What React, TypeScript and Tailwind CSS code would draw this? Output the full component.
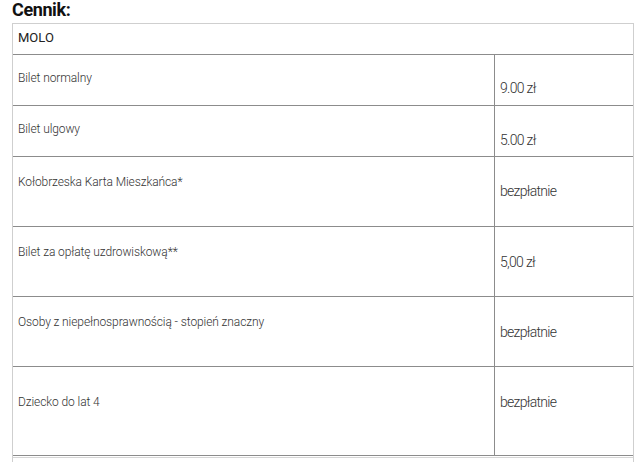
const rows = [
  { label: 'Bilet normalny', price: '9.00 zł', h: 'h-[51px]', lp: 'pt-[15px]', rp: 'pt-[24px]' },
  { label: 'Bilet ulgowy', price: '5.00 zł', h: 'h-[51px]', lp: 'pt-[15px]', rp: 'pt-[25px]' },
  { label: 'Kołobrzeska Karta Mieszkańca*', price: 'bezpłatnie', h: 'h-[70px]', lp: 'pt-[17px]', rp: 'pt-[25px]' },
  { label: 'Bilet za opłatę uzdrowiskową**', price: '5,00 zł', h: 'h-[70px]', lp: 'pt-[17px]', rp: 'pt-[26px]' },
  { label: 'Osoby z niepełnosprawnością - stopień znaczny', price: 'bezpłatnie', h: 'h-[70px]', lp: 'pt-[17px]', rp: 'pt-[26px]' },
  { label: 'Dziecko do lat 4', price: 'bezpłatnie', h: 'h-[89px]', lp: 'pt-[27px]', rp: 'pt-[26px]' },
];

export default function App() {
  return (
    <div className="min-h-[462px] bg-white px-3 font-['Roboto',sans-serif]">
      <h2 className="text-[18px] leading-[20px] font-bold tracking-[-0.4px] text-[#111]">Cennik:</h2>

      <div className="mt-[3px] w-[622px] border-x border-t border-[#cfcfcf]">
        <div className="h-[31px] border-b border-[#8c8c8c] pl-[5px] pt-[6px] text-[13px] leading-[16px] font-normal text-[#222]">
          MOLO
        </div>

        {rows.map((row) => (
          <div
            key={row.label}
            className={`grid grid-cols-[481px_1fr] border-b border-[#8c8c8c] ${row.h}`}
          >
            <div className={`pl-[5px] text-[12px] leading-[16px] font-light tracking-[-0.1px] text-[#333] ${row.lp}`}>
              {row.label}
            </div>
            <div className={`border-l border-[#8c8c8c] pl-[5px] text-[14px] leading-[18px] font-light tracking-[-0.7px] text-[#333] ${row.rp}`}>
              {row.price}
            </div>
          </div>
        ))}

        <div className="mt-[1px] h-[20px] border-t border-[#d6d6d6]" />
      </div>
    </div>
  );
}
